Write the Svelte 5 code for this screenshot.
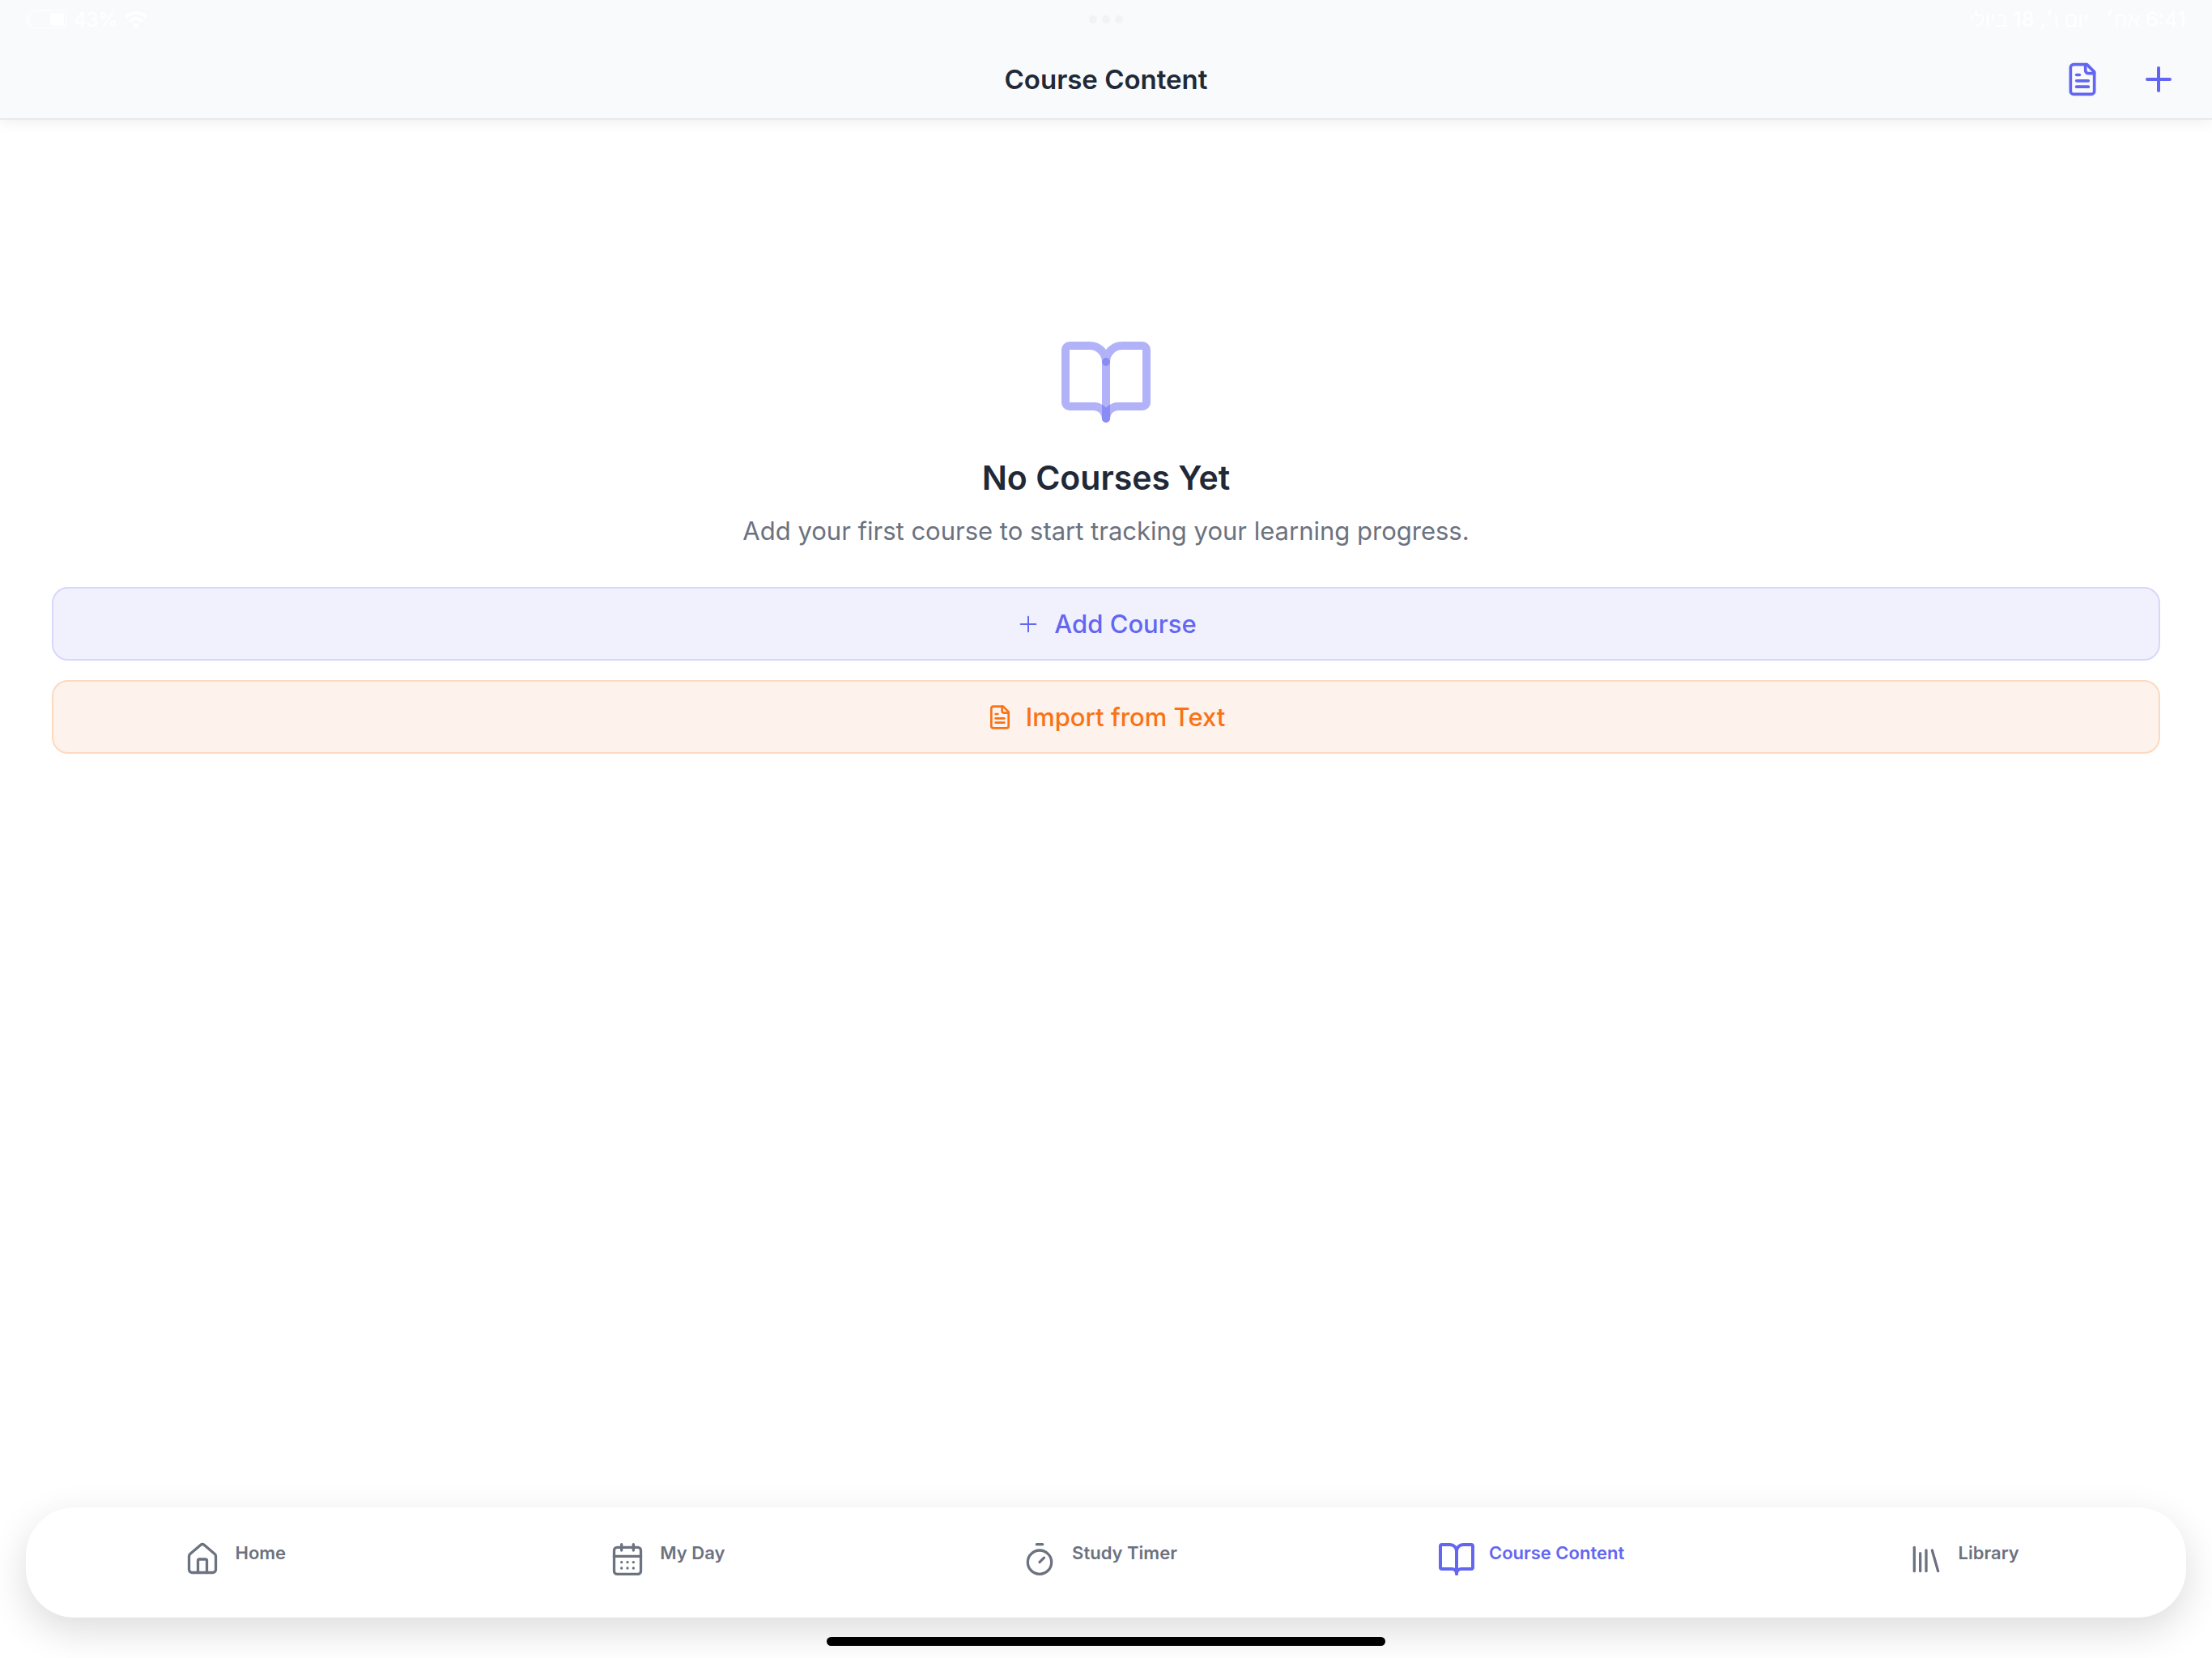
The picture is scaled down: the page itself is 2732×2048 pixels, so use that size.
<script lang="ts">
    // Icon shapes on a 24 x 24 grid
    const icons = {
        plus: ['M5 12h14', 'M12 5v14'],
        file: [
            'M15 2H6a2 2 0 0 0-2 2v16a2 2 0 0 0 2 2h12a2 2 0 0 0 2-2V7Z',
            'M14 2v4a2 2 0 0 0 2 2h4',
            'M10 9H8',
            'M16 13H8',
            'M16 17H8'
        ],
        home: [
            'M15 21v-8a1 1 0 0 0-1-1h-4a1 1 0 0 0-1 1v8',
            'M3 10a2 2 0 0 1 .709-1.528l7-5.999a2 2 0 0 1 2.582 0l7 5.999A2 2 0 0 1 21 10v9a2 2 0 0 1-2 2H5a2 2 0 0 1-2-2z'
        ],
        calendar: [
            'M8 2v4',
            'M16 2v4',
            'M5 4h14a2 2 0 0 1 2 2v14a2 2 0 0 1-2 2H5a2 2 0 0 1-2-2V6a2 2 0 0 1 2-2z',
            'M3 10h18',
            'M8 14h.01',
            'M12 14h.01',
            'M16 14h.01',
            'M8 18h.01',
            'M12 18h.01',
            'M16 18h.01'
        ],
        timer: ['M10 2h4', 'M12 14l3-3', 'M4 14a8 8 0 1 0 16 0a8 8 0 1 0-16 0'],
        book: [
            'M12 7v14',
            'M3 18a1 1 0 0 1-1-1V4a1 1 0 0 1 1-1h5a4 4 0 0 1 4 4 4 4 0 0 1 4-4h5a1 1 0 0 1 1 1v13a1 1 0 0 1-1 1h-6a3 3 0 0 0-3 3 3 3 0 0 0-3-3z'
        ],
        library: ['m16 6 4 14', 'M12 6v14', 'M8 8v12', 'M4 4v16']
    };

    const tabs = [
        { id: 'home', label: 'Home', icon: icons.home },
        { id: 'day', label: 'My Day', icon: icons.calendar },
        { id: 'timer', label: 'Study Timer', icon: icons.timer },
        { id: 'courses', label: 'Course Content', icon: icons.book },
        { id: 'library', label: 'Library', icon: icons.library }
    ];

    let activeTab = $state('courses');
</script>

{#snippet icon(paths: string[], size: number, stroke: number)}
    <svg
        class="icon"
        width={size}
        height={size}
        viewBox="0 0 24 24"
        stroke-width={stroke}
        aria-hidden="true"
    >
        {#each paths as d}
            <path {d} />
        {/each}
    </svg>
{/snippet}

<div class="screen">
    <header class="header">
        <div class="status-bar">
            <div class="status-left">
                <svg class="battery" width="51" height="24" viewBox="0 0 51 24" aria-hidden="true">
                    <path class="battery-case" d="M0 12q0-4 2-5v10q-2-1-2-5z" />
                    <rect class="battery-outline" x="4" y="1" width="46" height="22" rx="7" />
                    <rect x="30" y="4" width="17" height="16" rx="4" fill="#fff" />
                </svg>
                <span>43%</span>
                <svg width="28" height="21" viewBox="0 0 28 21" fill="none" stroke="#fff" aria-hidden="true">
                    <path d="M2 7a17 17 0 0 1 24 0" stroke-width="4" />
                    <path d="M6 12.500a11 11 0 0 1 16 0" stroke-width="4" />
                    <path d="M14 21l-4-4a5.700 5.700 0 0 1 8 0z" fill="#fff" stroke="none" />
                </svg>
            </div>
            <div class="dots"><i></i><i></i><i></i></div>
            <div class="status-right" dir="rtl" lang="he">
                <span>6:41 אח׳</span>
                <span>יום ו׳, 18 ביולי</span>
            </div>
        </div>
        <div class="title-bar">
            <h1>Course Content</h1>
            <div class="actions">
                <button aria-label="Import from text">{@render icon(icons.file, 44, 2)}</button>
                <button aria-label="Add course">{@render icon(icons.plus, 48, 2)}</button>
            </div>
        </div>
    </header>

    <main class="content">
        <div class="empty-icon">{@render icon(icons.book, 120, 2)}</div>
        <h2>No Courses Yet</h2>
        <p>Add your first course to start tracking your learning progress.</p>
        <div class="buttons">
            <button class="add">
                {@render icon(icons.plus, 32, 1.5)}
                Add Course
            </button>
            <button class="import">
                {@render icon(icons.file, 32, 2)}
                Import from Text
            </button>
        </div>
    </main>

    <nav class="tab-bar">
        {#each tabs as tab}
            <button
                class="tab"
                class:active={activeTab === tab.id}
                onclick={() => (activeTab = tab.id)}
            >
                <span class="tab-icon">
                    {@render icon(tab.icon, activeTab === tab.id ? 48 : 44, activeTab === tab.id ? 2 : 1.8)}
                </span>
                <span class="tab-label">{tab.label}</span>
            </button>
        {/each}
    </nav>

    <div class="home-indicator"></div>
</div>

<style>
    :global(body) {
        margin: 0;
        background-color: #fff;
    }

    .screen {
        display: flex;
        flex-direction: column;
        min-height: 100vh;
        overflow: hidden;
        font-family: Inter, "Liberation Sans", sans-serif;
        color: #1f2937;
    }

    h1,
    h2,
    p {
        margin: 0;
    }

    button {
        border: none;
        padding: 0;
        background: none;
        font: inherit;
        color: #6366f1;
        cursor: pointer;
    }

    .icon {
        display: block;
        flex: none;
        fill: none;
        stroke: currentColor;
        stroke-linecap: round;
        stroke-linejoin: round;
    }

    .header {
        background-color: #f9fafc;
        border-bottom: 2px solid #e9eaec;
        box-shadow: 0 4px 16px rgba(0, 0, 0, 0.06);
    }

    .status-bar {
        display: grid;
        grid-template-columns: 1fr auto 1fr;
        align-items: center;
        height: 48px;
        padding: 0 32px 2px;
        font-size: 24px;
        font-weight: 500;
        color: #fff;
    }

    .status-left {
        display: flex;
        align-items: center;
        gap: 8px;
    }

    .battery-case {
        fill: #fcfdfe;
    }

    .battery-outline {
        fill: none;
        stroke: #fcfdfe;
        stroke-width: 2;
    }

    .dots {
        display: flex;
        gap: 6px;
    }

    .dots i {
        width: 10px;
        height: 10px;
        border-radius: 50%;
        background-color: #f2f3f5;
    }

    .status-right {
        display: flex;
        gap: 22px;
        font-size: 25px;
    }

    .title-bar {
        display: grid;
        grid-template-columns: 1fr auto 1fr;
        align-items: center;
        height: 96px;
        padding: 0 42px;
    }

    .title-bar h1 {
        grid-column: 2;
        font-size: 33px;
        line-height: 40px;
        font-weight: 600;
    }

    .actions {
        display: flex;
        justify-content: flex-end;
        align-items: center;
        gap: 48px;
    }

    .content {
        flex: 1;
        display: flex;
        flex-direction: column;
        align-items: center;
        padding: 264px 64px 64px;
    }

    .empty-icon {
        margin-bottom: 32px;
        color: rgba(99, 102, 241, 0.5);
    }

    .content h2 {
        margin-bottom: 16px;
        font-size: 41px;
        line-height: 52px;
        font-weight: 600;
    }

    .content p {
        margin-bottom: 46px;
        font-size: 31px;
        line-height: 47px;
        color: #6b7280;
    }

    .buttons {
        display: flex;
        flex-direction: column;
        align-self: stretch;
        gap: 24px;
    }

    .buttons button {
        display: flex;
        justify-content: center;
        align-items: center;
        gap: 16px;
        padding: 24px;
        border: 2px solid #d7d7fb;
        border-radius: 20px;
        background-color: #f1f1fe;
        font-size: 31px;
        line-height: 39px;
        font-weight: 500;
    }

    .buttons .import {
        border-color: #fdd9c0;
        background-color: #fdf2ec;
        color: #f97316;
    }

    .tab-bar {
        display: flex;
        margin: 0 32px 24px;
        padding: 40px 0 48px;
        border-radius: 60px;
        background-color: #fff;
        box-shadow: 0 16px 48px rgba(0, 0, 0, 0.14);
    }

    .tab {
        flex: 1 1 0;
        display: flex;
        justify-content: center;
        align-items: flex-start;
        gap: 16px;
        padding-right: 18px;
        color: #6b7280;
    }

    .tab-icon {
        display: flex;
        justify-content: center;
        align-items: center;
        width: 48px;
        height: 48px;
    }

    .tab-label {
        font-size: 22px;
        line-height: 32px;
        font-weight: 600;
    }

    .tab.active {
        color: #6366f1;
    }

    .home-indicator {
        align-self: center;
        width: 690px;
        max-width: 60%;
        height: 11px;
        margin-bottom: 15px;
        border-radius: 6px;
        background-color: #000;
        /* stays above the tab bar shadow */
        position: relative;
    }
</style>
